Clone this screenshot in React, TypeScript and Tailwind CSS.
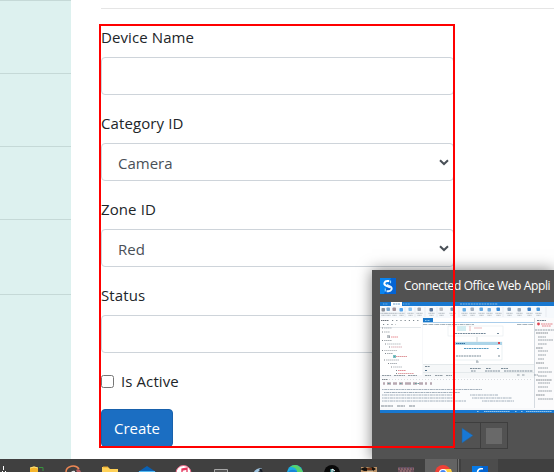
import React from "react";

const fontUi = "font-['Open_Sans','Noto_Sans',sans-serif]";

function Label({ children }: { children: string }) {
  return <label className="mb-2 block h-6 text-[15px] leading-[25px] tracking-[0.1px] whitespace-nowrap text-[#212529]">{children}</label>;
}

function Chevron() {
  return (
    <svg className="h-[7px] w-[10px]" viewBox="0 0 10 7" fill="none">
      <path d="M1 1.2 5 5 9 1.2" stroke="#495057" strokeWidth="2" />
    </svg>
  );
}

function SelectBox({ value }: { value: string }) {
  return (
    <div className="flex h-[38px] items-center justify-between rounded border border-[#ced4da] bg-white pr-1 pl-4">
      <span className="pt-0.5 text-[15px] leading-6 text-[#495057]">{value}</span>
      <Chevron />
    </div>
  );
}

function AppLogo({ className }: { className: string }) {
  return (
    <svg className={className} viewBox="0 0 16 16">
      <rect width="16" height="16" fill="#0a84ee" />
      <path d="M11 0h5v16H4z" fill="#0363d4" />
      <path d="M9.2 3H7.4C4.2 3 3.4 6.2 5.6 7.4L10 9.4" fill="none" stroke="#fff" strokeWidth="1.9" />
      <path d="M6.6 13.2h1.8c3.4 0 4.2-3.4 2-4.6L6.8 6.8" fill="none" stroke="#e4f4ff" strokeWidth="1.9" />
      <path d="M10.5 2.6v2.6M5.3 10.6v2.8" stroke="#8bd2ff" strokeWidth="1.2" />
    </svg>
  );
}

const ribbon: [number, string][] = [
  [3, "#777b82"], [8, "#6a9bc4"], [14, "#948087"], [21, "#3494e8"], [30, "#75b7e9"], [39, "#8f98a3"], [51, "#425f86"],
  [61, "#afb4ba"], [72, "#648bac"], [84, "#4da1de"], [92, "#91a0b1"], [101, "#4a9adb"], [109, "#64a6dc"], [118, "#1478d4"],
  [129, "#6889aa"], [139, "#8f9fae"], [149, "#1768bd"], [158, "#318bd6"],
];

const tree: [number, number, number, string][] = [
  [4, 26, 8, "#98a2aa"], [4, 30, 6, "#8b9298"], [11, 35, 7, "#e05a62"], [4, 38.5, 8, "#858c92"], [7, 42, 14, "#9da5ac"],
  [11, 45, 11, "#c98c94"], [4, 48.5, 13, "#a3a7ac"], [7, 51.5, 6, "#858b91"], [16, 54.5, 11, "#d0656b"], [6, 58, 13, "#92979d"],
  [10, 61.5, 7, "#888f97"], [13, 65, 9, "#999ea5"], [18, 68.5, 8, "#d85965"], [18, 71.5, 16, "#cf7478"],
];

const sideRows: [number, number][] = [
  [31, 12], [35, 8], [38, 15], [42, 9], [46, 7], [49, 10], [53, 8], [57, 6], [61, 8], [66, 10], [70, 14],
  [74, 9], [78, 16], [81, 12], [85, 10], [89, 14], [93, 9], [97, 15],
];

function Thumbnail() {
  return (
    <svg className="block h-[111px] w-[174px]" viewBox="0 0 174 111">
      <rect width="174" height="111" fill="#f7f8fa" />
      <rect width="174" height="4" fill="#1878d0" />
      <path d="M3 2h5M23 2h7" stroke="#76b8eb" strokeDasharray="1 .6" />
      <path d="M80 2h38" stroke="#86bbe4" strokeDasharray="2 .7" />
      <rect x="11" width="11" height="5" fill="#fff" />
      <path d="M13 2h7" stroke="#699ecb" strokeDasharray="2 .5" />
      <rect y="4" width="174" height="12" fill="#f6f9fc" />
      {ribbon.map(([x, color], i) => (
        <g key={i}>
          <rect x={x - 1.5} y={i % 3 ? 5.5 : 6} width="3.5" height="3.5" rx=".8" fill={color} opacity=".85" />
          <path d={`M${x - 2.5} 11.3h6m-5 2h4`} stroke="#7e8993" strokeWidth=".8" strokeDasharray="1.2 .4" opacity=".75" />
        </g>
      ))}
      <path d="M25 5v10M35 5v10M45 5v10M57 5v10M79 5v10M123 5v10M166 5v10" stroke="#d9dee4" strokeWidth=".5" />
      <rect y="16" width="42" height="57" fill="#fff" />
      <path d="M1 18.5h8" stroke="#6d737b" strokeDasharray="1.5 .5" />
      <path d="M12 18.5h29M3 22.5h13" stroke="#7d878e" strokeDasharray="1.2 3" />
      <path d="M0 25h41v1H0z" fill="#e4e8eb" />
      {tree.map(([x, y, width, color], i) => (
        <g key={i} opacity=".75">
          <path d={`M${x} ${y}h${width}`} stroke={color} strokeWidth=".9" strokeDasharray="1.6 .4" />
          <path d={`M${x - 2} ${y}h1`} stroke="#545c65" strokeWidth="1" />
        </g>
      ))}
      <rect x="7" y="33" width="3" height="3" fill="#79848b" opacity=".5" />
      <rect x="13" y="53" width="3" height="3" fill="#44a7aa" opacity=".7" />

      <rect x="43" y="16" width="111" height="59" fill="#fff" />
      <path d="M43 20.5h111" stroke="#a9cdeb" />
      <rect x="43" y="16" width="10" height="4" fill="#1978ca" />
      <path d="M45 18.5h5" stroke="#8fc7ef" strokeDasharray="1 .5" />
      <path d="M43 22.5h51M137 22.5h16" stroke="#80929d" strokeDasharray="4 .6 1 .5" opacity=".7" />
      <rect x="68" y="24" width="55" height="10" fill="#fff" stroke="#e5eaed" strokeWidth=".6" />
      <rect x="77" y="24" width="9" height="5" fill="#d4edf1" />
      <path d="M90 24v5m4-3h8" stroke="#df8f92" strokeWidth=".6" />
      <path d="M75 31.5h31m11 0h2" stroke="#74899a" strokeDasharray="2 .6" />
      <path d="M97 35v5m0 17v3" stroke="#b9c4ca" strokeWidth=".7" />
      <rect x="74" y="40" width="48" height="18" fill="#fff" stroke="#e1eaee" strokeWidth=".7" />
      <rect x="74" y="40" width="48" height="3" fill="#acd5e9" />
      <path d="M76 41.5h9" stroke="#336f9e" strokeDasharray="1.5 .4" />
      <rect x="118" y="40" width="2" height="2" fill="#d74750" />
      <path d="M84 46.5h25m8 0h2" stroke="#589dc4" strokeDasharray="2 .5" />
      <path d="M76 54h25m17 0h2" stroke="#778995" strokeDasharray="2 .6" />

      <rect x="154" y="16" width="20" height="91" fill="#fbfbfc" />
      <path d="M154.5 16v90" stroke="#cbd3d9" strokeWidth=".8" />
      <path d="M157 18.5h9" stroke="#70808d" strokeDasharray="2 .5" />
      <circle cx="158.5" cy="22" r="1.4" fill="#e24250" />
      <path d="M161 22h12m-11 2h9" stroke="#e38087" strokeDasharray="1.8 .5" />
      <path d="M155 28h19" stroke="#919ca5" strokeDasharray="2 .6" />
      {sideRows.map(([y, width], i) => (
        <path key={y} d={`M${i % 4 === 0 ? 156 : 158} ${y}h${width}`} stroke={i % 4 === 0 ? "#777f87" : "#8d969e"} strokeWidth=".9" strokeDasharray="1.8 .4" />
      ))}
      <rect x="43" y="62" width="111" height="14" fill="#f5f7f8" />
      <path d="M97 58v3m-1-1h3" stroke="#929ea6" strokeWidth=".7" />
      <path d="M43 62.5h111M43 70.5h111" stroke="#d9dfe3" strokeWidth=".6" />
      <path d="M45 64.5h5M90 66.5h11m5 0h5m10 0h7M91 69h5m9 0h15m4 0h29" stroke="#7c8c98" strokeDasharray="2 .6" />
      <path d="M45 68.5h2" stroke="#4a6a86" />
      <path d="M2 73.5h9m3 0h11m3 0h9m8 0h6m4 0h8m3 0h6M137 73h3m2 0h3m9 0h4" stroke="#7a8791" strokeDasharray="2 .5" opacity=".8" />
      <rect y="76" width="154" height="30" fill="#fbfcfd" />
      <path d="M2 77.5h6" stroke="#7d858c" strokeDasharray="1.5 .4" />
      <path d="M9 77.5h143" stroke="#c0c5ca" strokeDasharray="1 2" opacity=".6" />
      <path d="M3 81.5h2m2 0h4m2 0h4m2 0h4m2 0h6m2 0h4m2 0h4m2 0h2m3 0h2" stroke="#a8949f" strokeWidth="2.4" opacity=".8" />
      <path d="M8 81.5h2m10 0h2m13 0h4" stroke="#679d9c" strokeDasharray="1 .5" />
      <path
        d="M2 87.5h100m-98 3h76m-78 2.5h70m18 0h28M2 96h72m18 0h40M2 99h84m16 0h32"
        stroke="#7c8e9f"
        strokeDasharray="1.6 .6 3 .5"
        strokeWidth=".8"
        opacity=".85"
      />
      <path d="M1 104h12m4 0h8m4 0h6" stroke="#7d8791" strokeDasharray="3 .4" />
      <rect y="108" width="174" height="3" fill="#1878d0" />
      <path d="M97 109.5h2m5 0h26m5 0h2m4 0h2m3 0h26" stroke="#92c4e9" strokeDasharray="1.6 .4" />
    </svg>
  );
}

function DevicePreview() {
  return (
    <aside className="absolute top-[270px] left-[372px] h-[189px] w-[182px] bg-[#525252] shadow-[0_0_14px_rgba(0,0,0,0.5)]">
      <header className="flex h-8 items-center pl-2">
        <AppLogo className="h-4 w-4 shrink-0" />
        <h2 className="ml-2 text-[12px] leading-5 tracking-[-0.38px] whitespace-nowrap text-white">Connected Office Web Appli</h2>
      </header>
      <div className="pl-2"><Thumbnail /></div>
      <div className="mt-[9px] ml-[82px] flex h-[27px] w-[54px] border border-[#3e3e3e]">
        <button className="flex w-[26px] items-center justify-center border-r border-[#3e3e3e]">
          <svg className="h-[17px] w-[13px]" viewBox="0 0 13 17"><path d="m1 1 11 7.5L1 16Z" fill="#1878d5" stroke="#2e5f8b" strokeWidth=".6" /></svg>
        </button>
        <div className="flex flex-1 items-center justify-center"><div className="h-4 w-4 bg-[#696969]" /></div>
      </div>
    </aside>
  );
}

function Taskbar() {
  return (
    <footer className="relative z-10 h-[13px] overflow-hidden bg-[#404040]">
      <svg className="block h-[13px] w-[554px]" viewBox="0 0 554 13">
        <rect x="425" width="32" height="13" fill="#636363" />
        <path d="M458.5 0v13" stroke="#707070" />
        <path d="M461 0h37v13h-37z" fill="#4c4c4c" />
        <path d="M3.5 7v4M2 12.5h1m2 0h1" stroke="#fff" />
        <path d="M30 9q4-3 8 0v4h-8z" fill="#f5b52b" /><path d="M30 9q4-2 8 0" stroke="#ffe47c" fill="none" />
        <path d="M39 8.5h4V12" stroke="#38943e" fill="none" />
        <path d="M66 13a7 6 0 0 1 13-3" fill="none" stroke="#ed8754" strokeWidth="1.5" />
        <path d="M71 13q2-2 4-1v1z" fill="#ddd" />
        <path d="m76 11 2-1 2 1 1 2h-4z" fill="#b55c61" />
        <path d="M102 8h6l2 2h8v3h-16z" fill="#ffd157" /><path d="M103 8h5" stroke="#e8a629" />
        <path d="m138 13 9-6 9 6z" fill="#0961b5" /><path d="M139 12h16v1h-16z" fill="#54b9f0" />
        <circle cx="183.5" cy="14" r="7.5" fill="#fff" stroke="#ec6988" /><path d="M182 14v-4l5-1v5M182 11l5-1" fill="none" stroke="#e5345c" strokeWidth="1.3" />
        <path d="M214.5 13v-2.5h13V13" fill="#545454" stroke="#a7a7a7" />
        <path d="M254 13q2-4 8-4l-4 4z" fill="#9fc3df" /><path d="m260 10 2 3" stroke="#171d28" strokeWidth="2" />
        <circle cx="295" cy="14" r="8" fill="#1dafe4" /><path d="M290 8q7-5 12 3l1 2h-6q0-5-7-5Z" fill="#57d36b" /><path d="M288 13q3-4 9-1v1Z" fill="#1784d6" />
        <circle cx="332" cy="14" r="8" fill="#090909" /><path d="M331 13v-3m2 0v3" stroke="#45d9df" /><path d="M332 13v-3l3 2" stroke="#fff" fill="none" />
        <path d="M361 8h16v5h-16z" fill="#bd9368" /><path d="m360 10 5-2 2 1 6-1 3 2-3 2h-9z" fill="#17130f" /><path d="M367 10h5" stroke="#db5f20" /><path d="M367 12h6" stroke="#f6d7ab" />
        <path d="M398 8h16v5h-16z" fill="#664c58" /><path d="M398 10h16m-14 2h12" stroke="#ad7c7d" strokeDasharray="2 1" /><path d="M399 9h14" stroke="#545a7c" strokeDasharray="1 2" />
        <circle cx="443" cy="14" r="8" fill="#ef4036" /><path d="M444 10h7l1 3h-8" fill="#ffd043" /><circle cx="443" cy="14" r="4" fill="#fff" /><circle cx="443" cy="14" r="3" fill="#4285f4" />
        <path d="M472 7h16v6h-16z" fill="#087be7" /><path d="M482 7h6v6h-8z" fill="#0362ce" /><path d="M483 9.8h-2q-3 0-3.5 3.2" stroke="#fff" strokeWidth="1.6" fill="none" />
      </svg>
    </footer>
  );
}

export default function App() {
  return (
    <div className={`relative flex h-[472px] w-[554px] flex-col overflow-hidden bg-white ${fontUi}`}>
      <main className="flex h-[459px]">
        <nav className="w-[71px] shrink-0 border-t border-[#c5d9d7] bg-[#ddf1ef]">
          <div className="h-[73px] border-b border-[#c5d9d7]" />
          <div className="h-[73px] border-b border-[#c5d9d7]" />
          <div className="h-[73px] border-b border-[#c5d9d7]" />
          <div className="h-[75px] border-b border-[#c5d9d7]" />
        </nav>
        <section className="min-w-0 flex-1 pt-2 pl-[30px]">
          <hr className="border-[#e5e5e5]" />
          <form className="mt-4 w-[353px]">
            <div className="mb-4">
              <Label>Device Name</Label>
              <div className="h-[38px] rounded border border-[#ced4da]" />
            </div>
            <div className="mb-4"><Label>Category ID</Label><SelectBox value="Camera" /></div>
            <div className="mb-4"><Label>Zone ID</Label><SelectBox value="Red" /></div>
            <div className="mb-4"><Label>Status</Label><div className="h-[38px] rounded border border-[#ced4da]" /></div>
            <label className="mb-4 flex h-6 items-center gap-[7px] text-[15px] leading-6 tracking-[0.1px] text-[#212529]">
              <div className="h-[13px] w-[13px] rounded-[2.5px] border border-[#767676] bg-white" />
              Is Active
            </label>
            <button type="button" className="flex h-[38px] w-[72px] items-center justify-center rounded border border-[#1861ac] bg-[#1b6ec2] text-[15px] leading-6 text-white">
              Create
            </button>
          </form>
        </section>
      </main>
      <DevicePreview />
      <Taskbar />
      <div className="pointer-events-none absolute top-6 left-[99px] z-20 h-[424px] w-[356px] border-2 border-[#f00]" />
    </div>
  );
}
